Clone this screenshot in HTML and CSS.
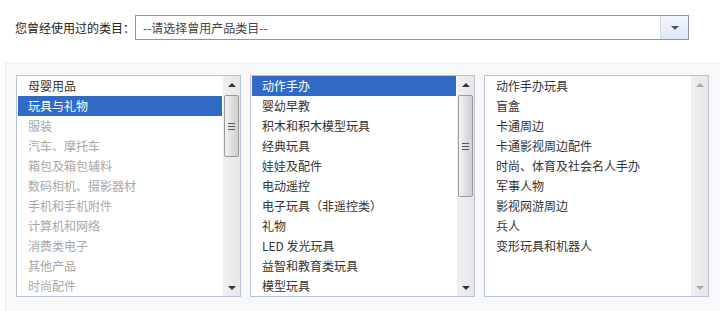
FILE: index.html
```html
<!DOCTYPE html>
<html lang="zh-CN">
<head>
<meta charset="utf-8">
<title>类目选择</title>
<link rel="stylesheet" href="styles.css">
</head>
<body>
<div class="page">
  <div class="used-row">
    <span class="used-label">您曾经使用过的类目：</span>
    <div class="select">
      <span class="select-text">--请选择曾用产品类目--</span>
      <span class="select-btn"><span class="tri-down"></span></span>
    </div>
  </div>
  <div class="panel">
    <div class="listbox">
      <ul class="items">
        <li>母婴用品</li>
        <li class="sel">玩具与礼物</li>
        <li class="dis">服装</li>
        <li class="dis">汽车、摩托车</li>
        <li class="dis">箱包及箱包辅料</li>
        <li class="dis">数码相机、摄影器材</li>
        <li class="dis">手机和手机附件</li>
        <li class="dis">计算机和网络</li>
        <li class="dis">消费类电子</li>
        <li class="dis">其他产品</li>
        <li class="dis">时尚配件</li>
      </ul>
      <div class="sbar">
        <span class="arr up"></span>
        <div class="track">
          <div class="thumb thumb1"><span class="grip"></span></div>
        </div>
        <span class="arr down"></span>
      </div>
    </div>
    <div class="listbox">
      <ul class="items">
        <li class="sel">动作手办</li>
        <li>婴幼早教</li>
        <li>积木和积木模型玩具</li>
        <li>经典玩具</li>
        <li>娃娃及配件</li>
        <li>电动遥控</li>
        <li>电子玩具（非遥控类）</li>
        <li>礼物</li>
        <li>LED 发光玩具</li>
        <li>益智和教育类玩具</li>
        <li>模型玩具</li>
      </ul>
      <div class="sbar">
        <span class="arr up"></span>
        <div class="track">
          <div class="thumb thumb2"><span class="grip"></span></div>
        </div>
        <span class="arr down"></span>
      </div>
    </div>
    <div class="listbox">
      <ul class="items">
        <li>动作手办玩具</li>
        <li>盲盒</li>
        <li>卡通周边</li>
        <li>卡通影视周边配件</li>
        <li>时尚、体育及社会名人手办</li>
        <li>军事人物</li>
        <li>影视网游周边</li>
        <li>兵人</li>
        <li>变形玩具和机器人</li>
      </ul>
      <div class="sbar off">
        <span class="arr up"></span>
        <div class="track"></div>
        <span class="arr down"></span>
      </div>
    </div>
  </div>
</div>
</body>
</html>
```
FILE: styles.css
```css
html, body {
  margin: 0;
  padding: 0;
  background: #ffffff;
}
body {
  font-family: "Noto Sans CJK SC", "Noto Sans", sans-serif;
  font-size: 12px;
  color: #333333;
  width: 720px;
  height: 311px;
  overflow: hidden;
}
.page {
  padding-top: 15px;
}
.used-row {
  display: flex;
  align-items: center;
  padding-left: 15px;
  height: 25px;
}
.used-label {
  width: 120px;
  color: #222222;
  line-height: 25px;
}
.select {
  display: flex;
  width: 554px;
  height: 25px;
  box-sizing: border-box;
  border: 1px solid #8a96a8;
  background: #fff;
}
.select-text {
  flex: 1;
  padding-left: 7px;
  line-height: 23px;
  color: #444444;
}
.select-btn {
  width: 27px;
  border-left: 1px solid #d3dcea;
  background: linear-gradient(#f3f7fe, #dde8f9);
  display: flex;
  align-items: center;
  justify-content: center;
}
.tri-down {
  width: 0;
  height: 0;
  border-left: 4px solid transparent;
  border-right: 4px solid transparent;
  border-top: 4px solid #4d5666;
}
.panel {
  margin-top: 23px;
  margin-left: 5px;
  height: 248px;
  box-sizing: border-box;
  background: #f8f8f8;
  border-top: 1px solid #eeeeee;
  border-left: 1px solid #eeeeee;
  padding: 11px 0 0 10px;
  display: flex;
  gap: 9px;
  align-items: flex-start;
}
.listbox {
  width: 225px;
  height: 222px;
  flex: none;
  box-sizing: border-box;
  border: 1px solid #b7c4d7;
  background: #ffffff;
  display: flex;
}
.items {
  list-style: none;
  margin: 0;
  padding: 0 1px;
  flex: 1;
  overflow: hidden;
}
.items li {
  height: 20px;
  line-height: 20px;
  padding-left: 10px;
  white-space: nowrap;
  color: #333333;
}
.items li.sel {
  background: #316ac5;
  color: #ffffff;
}
.items li.dis {
  color: #a8a8a8;
}
.sbar {
  width: 17px;
  flex: none;
  display: flex;
  flex-direction: column;
  background: linear-gradient(90deg, #f0f0f0, #e6e6e6);
}
.arr {
  height: 17px;
  flex: none;
  display: flex;
  align-items: center;
  justify-content: center;
}
.arr::before {
  content: "";
  width: 0;
  height: 0;
  border-left: 4px solid transparent;
  border-right: 4px solid transparent;
}
.arr.up::before {
  border-bottom: 4px solid #333333;
}
.arr.down::before {
  border-top: 4px solid #333333;
}
.sbar.off .arr.up::before {
  border-bottom-color: #aaaaaa;
}
.sbar.off .arr.down::before {
  border-top-color: #aaaaaa;
}
.track {
  flex: 1;
  padding-top: 2px;
}
.thumb {
  margin: 0 1px;
  box-sizing: border-box;
  border: 1px solid #9a9a9a;
  border-radius: 2px;
  background: linear-gradient(90deg, #f4f4f4, #dcdcdc 60%, #d0d0d0);
  display: flex;
  align-items: center;
  justify-content: center;
}
.thumb1 {
  height: 62px;
}
.thumb2 {
  height: 102px;
}
.grip {
  width: 7px;
  height: 7px;
  background: repeating-linear-gradient(#555555 0 1px, transparent 1px 3px);
}
```
